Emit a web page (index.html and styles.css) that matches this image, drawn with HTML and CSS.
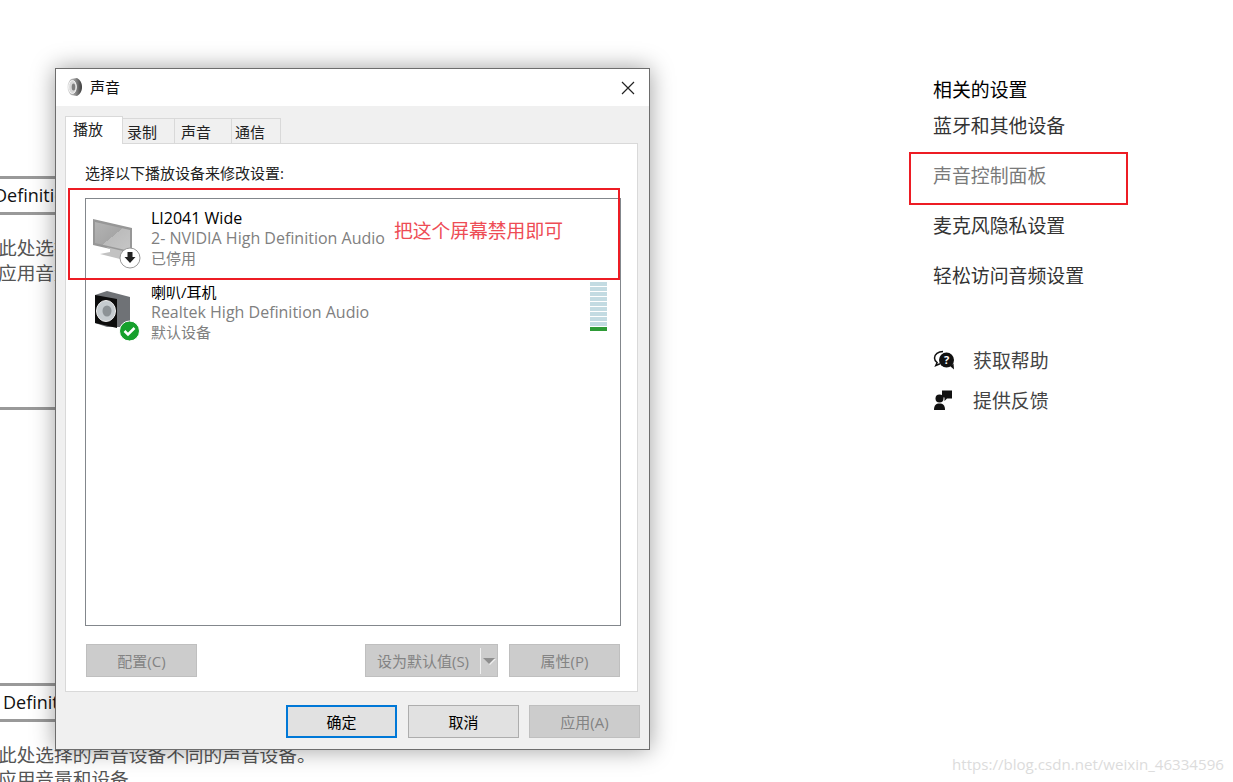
FILE: index.html
```html
<!DOCTYPE html>
<html lang="zh-CN">
<head>
<meta charset="utf-8">
<title>声音</title>
<link rel="stylesheet" href="styles.css">
</head>
<body>
<div class="page">
  <main class="settings-main">
    <div class="device-box first"><span class="clip-a">Definition</span></div>
    <p class="note first-note">此处选择的声音设备<br>应用音量和设备</p>
    <div class="rule"></div>
    <div class="device-box second"><span class="clip-b">Definition</span></div>
    <p class="note second-note">此处选择的声音设备不同的声音设备。<br>应用音量和设备</p>
  </main>

  <aside class="related">
    <h2 class="related-title">相关的设置</h2>
    <nav class="related-links">
      <a>蓝牙和其他设备</a>
      <a class="muted">声音控制面板</a>
      <a>麦克风隐私设置</a>
      <a>轻松访问音频设置</a>
    </nav>
    <ul class="help-list">
      <li>
        <svg class="help-icon" viewBox="0 0 22 22" width="22" height="22">
          <path d="M10 2.500C5.200 2.500 1.500 5.400 1.500 9c0 2 1.100 3.500 2.600 4.600L2.800 16.500l4.200-1.800" fill="none" stroke="#111" stroke-width="1.500"/>
          <circle cx="13.500" cy="11" r="7.500" fill="#111"/>
          <path d="M17 17l4 3.500-.5-6z" fill="#111"/>
          <text class="help-q" x="13.500" y="15">?</text>
        </svg>
        <span>获取帮助</span>
      </li>
      <li>
        <svg class="help-icon" viewBox="0 0 22 22" width="22" height="22">
          <circle cx="6.500" cy="9.500" r="4" fill="#111"/>
          <path d="M1 21c0-5 2-6.500 5.500-6.500S12 16 12 21z" fill="#111"/>
          <path d="M9 1.500h10v8h-5l-2.500 2.500V8.500H9z" fill="#111"/>
        </svg>
        <span>提供反馈</span>
      </li>
    </ul>
  </aside>
</div>

<section class="window">
  <header class="titlebar">
    <svg class="title-icon" viewBox="0 0 18 20" width="18" height="20">
      <defs>
        <linearGradient id="spk" x1="0" y1="0" x2="1" y2="0">
          <stop offset="0" stop-color="#dcdcdc"/><stop offset=".55" stop-color="#8d8d8d"/><stop offset="1" stop-color="#3c3c3c"/>
        </linearGradient>
      </defs>
      <path d="M5 2 11 1c3 1.500 5 5 5 9s-2 7.500-5 9l-6-1C3 16 1.500 13.500 1.500 10S3 4 5 2z" fill="url(#spk)"/>
      <ellipse cx="6.500" cy="10" rx="3.800" ry="6.500" fill="#d8d8d8" stroke="#f7f7f7"/>
      <ellipse cx="7.500" cy="10" rx="1.800" ry="3.500" fill="#7f7f7f"/>
    </svg>
    <span class="title-text">声音</span>
    <svg class="close-icon" viewBox="0 0 14 14" width="14" height="14">
      <path d="M1 1l12 12M13 1 1 13" stroke="#222" stroke-width="1.200" fill="none"/>
    </svg>
  </header>
  <div class="window-body">
    <div class="tabs">
      <span class="tab active">播放</span>
      <span class="tab t2">录制</span>
      <span class="tab t3">声音</span>
      <span class="tab t4">通信</span>
    </div>
    <div class="panel">
      <p class="panel-label">选择以下播放设备来修改设置:</p>
      <div class="device-list">
        <div class="device">
          <svg class="device-icon" viewBox="0 0 52 58" width="52" height="58">
            <defs>
              <linearGradient id="scr" x1="0" y1="0" x2="1" y2="1">
                <stop offset="0" stop-color="#b4b4b4"/><stop offset=".5" stop-color="#a6a6a6"/><stop offset=".5" stop-color="#bcbcbc"/><stop offset="1" stop-color="#c6c6c6"/>
              </linearGradient>
            </defs>
            <path d="M3 3 42 12V38L3 29z" fill="#979797"/>
            <path d="M5 6 40 14V35L5 27z" fill="url(#scr)"/>
            <path d="M16 31 33 35V39L42 41 30 43 10 38 20 36V33z" fill="#c2c2c2"/>
            <circle cx="40" cy="42" r="10" fill="#fff" stroke="#9a9a9a"/>
            <path d="M37.500 36h5v5h3l-5.500 6-5.500-6h3z" fill="#222"/>
          </svg>
          <div class="device-text">
            <div class="device-name">LI2041 Wide</div>
            <div class="device-sub">2- NVIDIA High Definition Audio</div>
            <div class="device-sub cjk">已停用</div>
          </div>
          <span class="annotation">把这个屏幕禁用即可</span>
        </div>
        <div class="device">
          <svg class="device-icon" viewBox="0 0 52 58" width="52" height="58">
            <path d="M5 5 17 1 40 7V37H17L5 33z" fill="#6f7276"/>
            <path d="M5 5 27 9V38L5 33z" fill="#0c0c0c"/>
            <ellipse cx="16" cy="21" rx="9.500" ry="10.500" fill="#c5cbcf" stroke="#eee"/>
            <ellipse cx="17" cy="21" rx="4.500" ry="5.500" fill="#8c9296"/>
            <circle cx="39.500" cy="41" r="10" fill="#16a02c" stroke="#fff"/>
            <path d="M34.500 41l3.500 3.500 6.500-6.500" fill="none" stroke="#fff" stroke-width="2.500"/>
          </svg>
          <div class="device-text">
            <div class="device-name cjk">喇叭/耳机</div>
            <div class="device-sub">Realtek High Definition Audio</div>
            <div class="device-sub cjk">默认设备</div>
          </div>
          <div class="meter"><i></i><i></i><i></i><i></i><i></i><i></i><i></i><i></i><i></i><i class="on"></i></div>
        </div>
      </div>
      <div class="panel-actions">
        <button class="btn disabled">配置(C)</button>
        <div class="right-actions">
          <button class="btn disabled split"><span class="split-label">设为默认值(S)</span><span class="split-arrow"></span></button>
          <button class="btn disabled">属性(P)</button>
        </div>
      </div>
    </div>
    <footer class="window-actions">
      <button class="btn primary">确定</button>
      <button class="btn">取消</button>
      <button class="btn disabled apply">应用(A)</button>
    </footer>
  </div>
</section>

<div class="mark mark-device"></div>
<div class="mark mark-link"></div>
<div class="watermark">https://blog.csdn.net/weixin_46334596</div>
</body>
</html>
```

FILE: styles.css
```css
* { box-sizing: border-box; }
html, body { margin: 0; padding: 0; }
body {
  position: relative;
  width: 1233px;
  height: 782px;
  overflow: hidden;
  background: #fff;
  font-family: "Open Sans", "Noto Sans CJK SC", sans-serif;
  color: #000;
}
.page {
  display: grid;
  grid-template-columns: 933px 1fr;
  height: 782px;
  overflow: hidden;
}

/* settings page behind the dialog */
.settings-main { overflow: hidden; padding-top: 176px; }
.device-box {
  height: 39px;
  width: 200px;
  border-top: 3px solid #999;
  border-bottom: 3px solid #999;
  font-size: 18px;
  line-height: 33px;
  white-space: nowrap;
  color: #111;
}
.clip-a { margin-left: -6px; }
.clip-b { margin-left: 3px; }
.note {
  margin: 0 0 0 -2px;
  font-size: 18.700px;
  line-height: 24px;
  color: #555;
  white-space: nowrap;
}
.first-note { margin-top: 20px; line-height: 25px; }
.second-note { margin-top: 21px; }
.rule { width: 200px; height: 3px; background: #999; margin-top: 122px; }
.second { margin-top: 273px; }

/* related settings column */
.related { padding-top: 76px; font-size: 18.900px; }
.related-title { margin: 0; font-size: 18.900px; font-weight: 400; line-height: 28px; color: #000; }
.related-links { display: flex; flex-direction: column; gap: 20px; margin-top: 7px; }
.related-links a { line-height: 30px; color: #333; }
.related-links .muted { color: #7a7a7a; }
.help-list { list-style: none; margin: 49px 0 0; padding: 0; }
.help-list li { display: flex; align-items: center; height: 40px; color: #444; }
.help-icon { flex: none; margin-right: 18px; }
.help-q { font-size: 11px; font-weight: 700; fill: #fff; text-anchor: middle; }

/* dialog window */
.window {
  position: absolute;
  left: 55px;
  top: 68px;
  width: 595px;
  height: 682px;
  display: flex;
  flex-direction: column;
  border: 1px solid #6d6d6d;
  background: #f0f0f0;
  box-shadow: 0 0 22px rgba(0, 0, 0, .38);
  font-size: 15px;
}
.titlebar {
  flex: none;
  display: flex;
  align-items: center;
  height: 37px;
  padding: 0 14px 2px 10px;
  background: #fff;
}
.title-text { margin-left: 6px; font-size: 15px; color: #111; }
.close-icon { margin-left: auto; margin-top: 2px; }
.window-body { flex: 1; display: flex; flex-direction: column; padding: 10px 11px 11px 9px; }

.tabs { flex: none; display: flex; align-items: flex-end; height: 28px; position: relative; z-index: 1; margin-bottom: -1px; }
.tab {
  height: 26px;
  border: 1px solid #d9d9d9;
  border-left: 0;
  line-height: 26px;
  background: #f0f0f0;
  color: #222;
}
.t2 { width: 52px; padding-left: 4px; }
.t3 { width: 57px; padding-left: 6px; }
.t4 { width: 49px; padding-left: 3px; }
.tab.active {
  width: 58px;
  height: 28px;
  padding-left: 7px;
  border-left: 1px solid #d9d9d9;
  border-bottom: 0;
  background: #fff;
  line-height: 25px;
}
.panel {
  flex: none;
  height: 549px;
  padding: 18px 16px 0 19px;
  border: 1px solid #d9d9d9;
  background: #fff;
}
.panel-label { margin: 0 0 14px; line-height: 22px; color: #222; }
.device-list {
  height: 428px;
  padding-top: 9px;
  border: 1px solid #83878c;
}
.device { display: flex; height: 74px; position: relative; padding-left: 4px; }
.device-icon { flex: none; margin-top: 8px; margin-right: 9px; }
.device-text { line-height: 20px; font-size: 16px; color: #808080; white-space: nowrap; }
.device-name { color: #000; }
.device-text .cjk { font-size: 15px; }
.annotation { margin-left: 9px; margin-top: 12px; font-size: 18.800px; line-height: 22px; color: #ee4c55; white-space: nowrap; }
.meter { margin-left: auto; margin-right: 13px; display: flex; flex-direction: column; gap: 1px; width: 17px; }
.meter i { display: block; height: 4px; background: #c3dbe2; }
.meter i.on { background: #2e9b37; }

.panel-actions { display: flex; justify-content: space-between; margin-top: 18px; padding-left: 1px; padding-right: 1px; }
.right-actions { display: flex; gap: 11px; }
.btn {
  flex: none;
  width: 111px;
  height: 33px;
  padding: 0;
  border: 1px solid #adadad;
  background: #e1e1e1;
  font: inherit;
  color: #000;
}
.btn.disabled { background: #cccccc; border-color: #bfbfbf; color: #838383; }
.btn.primary { border: 2px solid #0078d7; }
.btn.split { width: 133px; display: flex; align-items: center; }
.split-label { width: 114px; }
.split-arrow {
  height: 26px;
  flex: 1;
  border-left: 1px solid #f0f0f0;
  position: relative;
}
.split-arrow::after {
  content: "";
  position: absolute;
  left: 2px;
  top: 10px;
  border-left: 6px solid transparent;
  border-right: 6px solid transparent;
  border-top: 6px solid #8e8e8e;
  filter: drop-shadow(1px 1px 0 #eee);
}
.window-actions { flex: none; display: flex; justify-content: flex-end; gap: 11px; margin: 13px -2px 0 0; }
.window-actions .apply { margin-left: -1px; }

/* red annotation boxes drawn over the screenshot */
.mark { position: absolute; border: 2px solid #ed1c24; pointer-events: none; }
.mark-device { left: 68px; top: 188px; width: 552px; height: 92px; }
.mark-link { left: 909px; top: 152px; width: 219px; height: 53px; }
.watermark {
  position: absolute;
  left: 952px;
  top: 754px;
  font-size: 15.100px;
  line-height: 20px;
  color: #dcdcdc;
  white-space: nowrap;
}
```
